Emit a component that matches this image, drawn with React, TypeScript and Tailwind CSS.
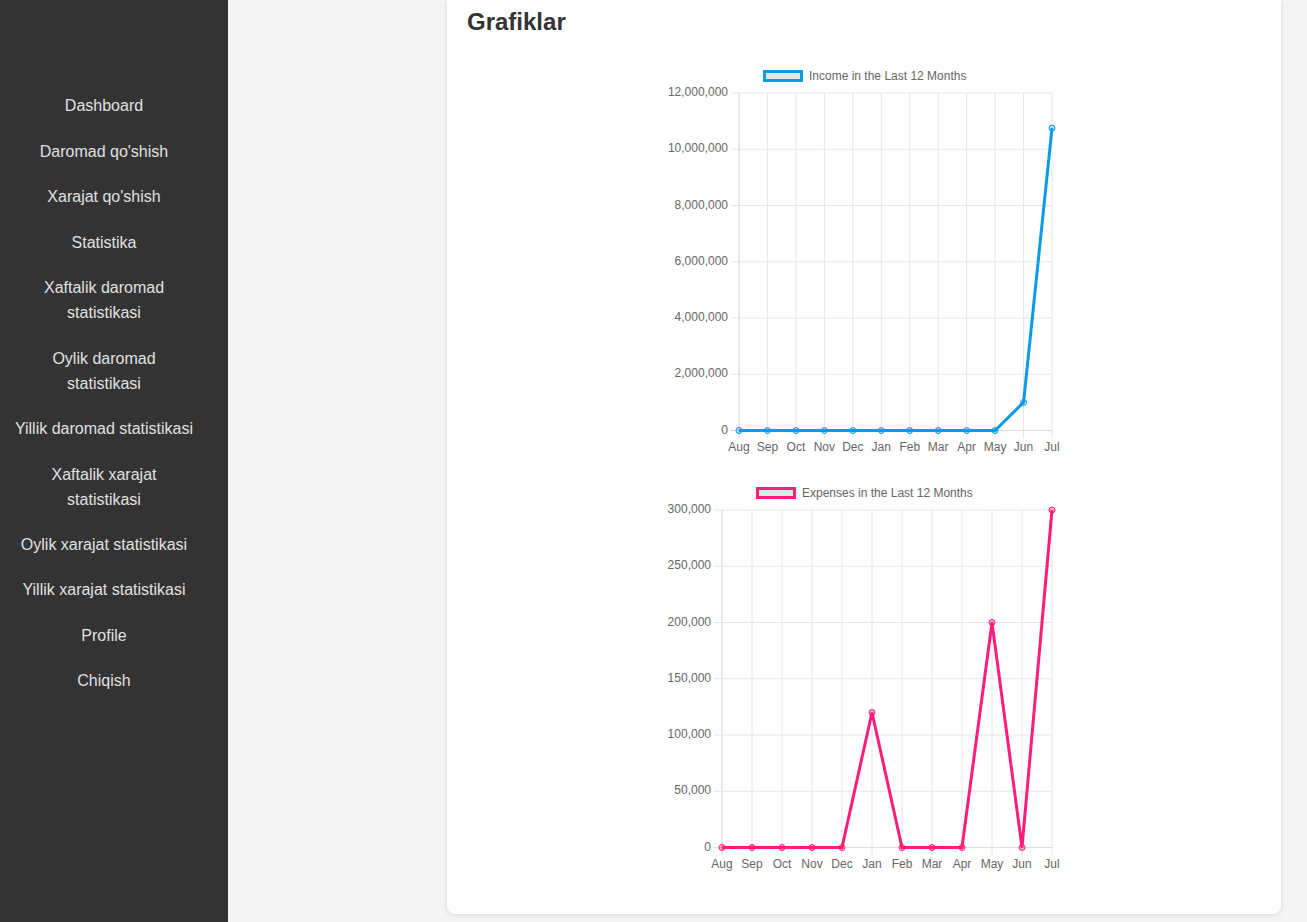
const MENU = [
  'Dashboard',
  "Daromad qo'shish",
  "Xarajat qo'shish",
  'Statistika',
  'Xaftalik daromad statistikasi',
  'Oylik daromad statistikasi',
  'Yillik daromad statistikasi',
  'Xaftalik xarajat statistikasi',
  'Oylik xarajat statistikasi',
  'Yillik xarajat statistikasi',
  'Profile',
  'Chiqish',
];

const MONTHS = ['Aug', 'Sep', 'Oct', 'Nov', 'Dec', 'Jan', 'Feb', 'Mar', 'Apr', 'May', 'Jun', 'Jul'];

const FONT = "'Liberation Sans', Arial, Helvetica, sans-serif";

type ChartProps = {
  label: string;
  color: string;
  pointFill: string;
  data: number[];
  max: number;
  step: number;
  left: number;
  legendX: number;
};

function LineChart({ label, color, pointFill, data, max, step, left, legendX }: ChartProps) {
  const right = 388;
  const top = 32;
  const bottom = 369.5;
  const xAt = (i: number) => left + ((right - left) * i) / (MONTHS.length - 1);
  const yAt = (v: number) => bottom - ((bottom - top) * v) / max;
  const ticks: number[] = [];
  for (let v = 0; v <= max; v += step) ticks.push(v);
  const points = data.map((v, i) => `${xAt(i)},${yAt(v)}`).join(' ');

  return (
    <svg width={400} height={400} viewBox="0 0 400 400" className="mx-auto block" style={{ fontFamily: FONT }}>
      {/* Legend */}
      <rect x={legendX + 1.5} y={10.5} width={37} height={9} fill="#e5e5e5" stroke={color} strokeWidth={3} />
      <text x={legendX + 46} y={15.5} fontSize={12} fill="#666" dominantBaseline="middle">
        {label}
      </text>

      {/* Grid */}
      {MONTHS.map((m, i) => (
        <line
          key={m}
          x1={xAt(i)}
          x2={xAt(i)}
          y1={top}
          y2={bottom + 8}
          stroke={i === 0 ? '#d0d0d0' : '#e6e6e6'}
          strokeWidth={1}
        />
      ))}
      {ticks.map((v) => (
        <line
          key={v}
          x1={left - 8}
          x2={right}
          y1={yAt(v)}
          y2={yAt(v)}
          stroke={v === 0 ? '#dcdcdc' : '#e6e6e6'}
          strokeWidth={1}
        />
      ))}

      {/* Labels */}
      {ticks.map((v) => (
        <text
          key={v}
          x={left - 11}
          y={yAt(v)}
          fontSize={12}
          fill="#666"
          textAnchor="end"
          dominantBaseline="middle"
        >
          {v.toLocaleString('en-US')}
        </text>
      ))}
      {MONTHS.map((m, i) => (
        <text key={m} x={xAt(i)} y={387} fontSize={12} fill="#666" textAnchor="middle" dominantBaseline="middle">
          {m}
        </text>
      ))}

      {/* Data */}
      <polyline points={points} fill="none" stroke={color} strokeWidth={3} strokeLinejoin="miter" />
      {data.map((v, i) => (
        <circle key={i} cx={xAt(i)} cy={yAt(v)} r={3} fill={pointFill} stroke={color} strokeWidth={1} />
      ))}
    </svg>
  );
}

export default function App() {
  return (
    <div className="flex h-screen overflow-hidden" style={{ fontFamily: FONT }}>
      {/* Sidebar */}
      <aside className="w-[228px] shrink-0 bg-[#333333] pt-[83px]">
        <nav className="flex flex-col pl-[14px] pr-[34px]">
          {MENU.map((item) => (
            <a
              key={item}
              href="#"
              className="block py-[10.24px] text-center text-base leading-[25px] text-[#e0e0e0]"
            >
              {item}
            </a>
          ))}
        </nav>
      </aside>

      {/* Main */}
      <main className="flex-1 bg-[#f4f4f4] pb-2 pl-[219px] pr-[26px]">
        <div className="rounded-b-lg bg-white px-5 pb-[36px] pt-2 shadow-[0_1px_5px_rgba(0,0,0,0.12)]">
          <h2 className="text-2xl font-bold leading-[27px] text-[#333333]">Grafiklar</h2>
          <div className="mt-[26px]">
            <LineChart
              label="Income in the Last 12 Months"
              color="#0a9be6"
              pointFill="rgba(10,155,230,0.25)"
              data={[0, 0, 0, 0, 0, 0, 0, 0, 0, 0, 1000000, 10750000]}
              max={12000000}
              step={2000000}
              left={75}
              legendX={99}
            />
          </div>
          <div className="mt-[17px]">
            <LineChart
              label="Expenses in the Last 12 Months"
              color="#fd1d7a"
              pointFill="rgba(253,29,122,0.35)"
              data={[0, 0, 0, 0, 0, 120000, 0, 0, 0, 200000, 0, 300000]}
              max={300000}
              step={50000}
              left={58}
              legendX={92}
            />
          </div>
        </div>
      </main>
    </div>
  );
}
